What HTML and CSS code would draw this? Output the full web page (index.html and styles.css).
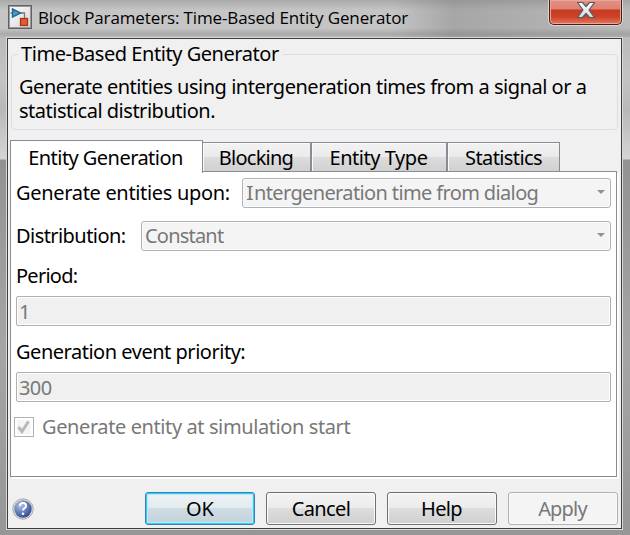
FILE: index.html
```
<!DOCTYPE html>
<html lang="en">
<head>
<meta charset="utf-8">
<title>Block Parameters: Time-Based Entity Generator</title>
<link rel="stylesheet" href="styles.css">
</head>
<body>
<div class="window">
  <header class="titlebar">
    <svg class="app-icon" width="24" height="24" viewBox="0 0 24 24">
      <defs>
        <linearGradient id="ig" x2="1" y2="1"><stop stop-color="#fff"/><stop offset="1" stop-color="#d5d5d5"/></linearGradient>
        <linearGradient id="bl" x2="1" y2="1"><stop stop-color="#2d779d"/><stop offset=".5" stop-color="#4fa5d2"/><stop offset="1" stop-color="#17557b"/></linearGradient>
      </defs>
      <rect x=".5" y=".5" width="23" height="23" fill="url(#ig)" stroke="#626262"/>
      <rect x="1.5" y="1.5" width="21" height="21" fill="none" stroke="#999"/>
      <path d="M2.500 8H5M12 8H16.500V13" fill="none" stroke="#777" stroke-width="1.300"/>
      <path d="M4.500 4L12.500 8L4.500 12Z" fill="url(#bl)" stroke="#286d94" stroke-width="1.500"/>
      <rect x="12.500" y="13.500" width="7" height="7" fill="#e25b36" stroke="#a93415" stroke-width="1.300"/>
    </svg>
    <h1 class="title">Block Parameters: Time-Based Entity Generator</h1>
    <button class="close" aria-label="Close">
      <svg width="20" height="18" viewBox="0 0 20 18">
        <defs><linearGradient id="xg" x2="0" y2="1"><stop stop-color="#fff"/><stop offset="1" stop-color="#d5d8dc"/></linearGradient></defs>
        <path d="M1.500 1.500H6.500L10 5.500L13.500 1.500H18.500L13 9L18.500 16.500H13.500L10 12.500L6.500 16.500H1.500L7 9Z" fill="url(#xg)" stroke="#555967" stroke-width="1.200" stroke-linejoin="round"/>
      </svg>
    </button>
  </header>
  <main class="client">
    <fieldset class="group">
      <legend><span class="t-legend">Time-Based Entity Generator</span></legend>
      <p class="t-desc">Generate entities using intergeneration times from a signal or a<br>statistical distribution.</p>
    </fieldset>
    <nav class="tabs">
      <div class="tab active"><span class="t-tab1">Entity Generation</span></div>
      <div class="tab blocking"><span class="t-tab2">Blocking</span></div>
      <div class="tab type"><span class="t-tab3">Entity Type</span></div>
      <div class="tab stats"><span class="t-tab4">Statistics</span></div>
    </nav>
    <section class="panel">
      <div class="row">
        <label class="label-upon"><span class="t-upon">Generate entities upon:</span></label>
        <div class="combo"><span class="t-inter"><span class="serif-i">I</span>ntergeneration time from dialog</span><i class="arrow"></i></div>
      </div>
      <div class="row second">
        <label class="label-dist"><span class="t-dist">Distribution:</span></label>
        <div class="combo"><span class="t-const">Constant</span><i class="arrow"></i></div>
      </div>
      <label class="line"><span class="t-period">Period:</span></label>
      <div class="field"><span class="t-one">1</span></div>
      <label class="line prio"><span class="t-prio">Generation event priority:</span></label>
      <div class="field"><span class="t-num">300</span></div>
      <div class="check">
        <div class="box"><svg width="14" height="14" viewBox="0 0 14 14"><path d="M1.500 7L5 11.500L11.500 1.500" fill="none" stroke="#b8b8b8" stroke-width="3"/></svg></div>
        <span class="t-check">Generate entity at simulation start</span>
      </div>
    </section>
    <footer class="footer">
      <svg class="help-icon" width="22" height="22" viewBox="0 0 22 22">
        <defs><radialGradient id="hg" cx=".35" cy=".3" r=".8"><stop stop-color="#b5c4e2"/><stop offset=".45" stop-color="#6d87c2"/><stop offset="1" stop-color="#293f88"/></radialGradient></defs>
        <circle cx="11" cy="11" r="10.200" fill="#ddd" stroke="#aaa"/>
        <circle cx="11" cy="11" r="8.700" fill="url(#hg)"/>
        <path d="M8 8Q8 5 11 5Q14 5 14 7.800Q14 9.300 12.300 10.300Q11 11.200 11 12.500" fill="none" stroke="#fff" stroke-width="2"/>
        <circle cx="11" cy="15.700" r="1.300" fill="#fff"/>
      </svg>
      <button class="btn ok"><span class="t-ok">OK</span></button>
      <button class="btn"><span class="t-cancel">Cancel</span></button>
      <button class="btn"><span class="t-help">Help</span></button>
      <button class="btn disabled"><span class="t-apply">Apply</span></button>
    </footer>
  </main>
</div>
</body>
</html>
```
FILE: styles.css
```
* { box-sizing: border-box; }
body { margin: 0; font: 20px/24px "Noto Sans", sans-serif; color: #000; overflow: hidden; }
.window {
  width: 630px; height: 535px; padding: 0 8px 0 7px;
  background:
    linear-gradient(90deg, transparent 0, rgba(140,140,140,0) 62%, rgba(120,120,120,.4) 72%, rgba(140,140,140,.2) 100%) 0 0/630px 37px no-repeat,
    linear-gradient(#aaa 0, #c5c5c5 10px, #c5c5c5 28px, #aaa 34px, #bbb 38px, #c3c3c3 80px, #b8b8b8 110px, #d5d5d5 159px, #929292 160px, #a5a5a5 350px, #969696 100%);
}
.titlebar { height: 38px; display: flex; align-items: flex-start; }
.app-icon { margin: 5px 0 0 1px; flex: none; }
.title { margin: 5px 0 0 6px; font: 17px/26px "Open Sans", sans-serif; letter-spacing: -.13px; white-space: nowrap; width: 511px; }
.close {
  width: 73px; height: 25px; padding: 0; flex: none; display: flex; justify-content: center;
  border: 1px solid #4a1c18; border-top: 0; border-radius: 0 0 5px 5px;
  background: linear-gradient(#df9387 0, #e07f70 9px, #c53a22 10px, #cf4229 17px, #e27a62 100%);
  box-shadow: inset 0 0 0 1px #eba696, 0 0 0 1px #d8d8d8;
}
.close svg { margin-top: 1px; }
.client {
  height: 491px; width: 615px; border: 1px solid #3e3e3e; background: #f0f0f0;
  box-shadow: 0 0 0 1px #d8d8d8; padding: 5px 3px 0 2px;
}
.group {
  margin: 0 0 0 1px; width: 607px; height: 86px; padding: 0 0 0 7px;
  border: 1px solid #d5dfe5; border-radius: 4px;
  white-space: nowrap;
}
.group legend { padding: 0 4px 0 3px; margin-left: -1px; height: 20px; line-height: 20px; }
.group p { margin: 11px 0 0; }
span { white-space: nowrap; }
.t-legend { letter-spacing: -.45px; }
.t-desc { letter-spacing: -.48px; }
.t-tab1 { letter-spacing: -.55px; margin-right: 2px; }
.t-tab2 { letter-spacing: -.75px; margin-right: 1px; }
.t-tab3 { letter-spacing: -.45px; margin-right: 1px; }
.t-tab4 { letter-spacing: -.6px; }
.t-upon { letter-spacing: -.32px; }
.t-inter { letter-spacing: -.63px; }
.t-dist { letter-spacing: -.56px; }
.t-const { letter-spacing: -.8px; }
.t-period { letter-spacing: -.75px; }
.t-prio { letter-spacing: -.48px; }
.t-one { margin-left: -1px; }
.t-num { letter-spacing: -.6px; margin-left: -1px; }
.t-check { letter-spacing: -.4px; }
.t-cancel { letter-spacing: -.6px; }
.t-help { letter-spacing: -.7px; margin-right: 1px; }
.t-apply { letter-spacing: -.8px; margin-right: 1px; }

/* capital I with crossbars */
.serif-i {
  display: inline-block; width: 8px; text-align: center; letter-spacing: 0; line-height: 24px;
  background:
    linear-gradient(#828282, #828282) 1px 5px/6px 1px no-repeat,
    linear-gradient(#828282, #828282) 1px 18px/6px 1px no-repeat;
}
.tabs { display: flex; align-items: flex-end; height: 32px; margin-top: 10px; }
.tab {
  flex: none; height: 30px; border: 1px solid #898c95; margin-left: -1px; text-align: center; line-height: 30px;
  background: linear-gradient(#f2f2f2 0, #ebebeb 48%, #ddd 50%, #d0d0d0 100%);
  box-shadow: inset 1px 1px #fafafa;
}
.tab.active { width: 193px; height: 33px; margin: 0 0 -1px; border-bottom: 0; background: #fff; z-index: 1; line-height: 33px; box-shadow: none; }
.tab.blocking { width: 109px; }
.tab.type { width: 136px; margin-left: 0; }
.tab.stats { width: 113px; margin-left: 0; }
.panel {
  width: 607px; height: 306px; margin-top: -1px; padding: 6px 5px 0; background: #fff; border: 1px solid #898c95;
  box-shadow: 2px 2px #fff;
}
.row { display: flex; height: 30px; align-items: center; }
.second { margin-top: 13px; }
.label-upon { width: 226px; }
.label-dist { width: 125px; }
.combo {
  flex: 1; height: 30px; border: 1px solid #adb2b5; border-radius: 3px; background: #f4f4f4; box-shadow: inset 0 0 0 1px #fcfcfc;
  color: #787878; padding: 0 5px 0 3px; display: flex; align-items: center; justify-content: space-between;
}
.arrow { border: 4px solid transparent; border-top-color: #919191; border-bottom: 0; margin-bottom: 2px; }
.line { display: block; height: 30px; line-height: 24px; margin-top: 13px; }
.line.prio { margin-top: 14px; }
.field { height: 30px; border: 1px solid #afafaf; border-radius: 2px; background: #f0f0f0; box-shadow: inset 0 0 0 1px #fff; color: #787878; padding-left: 3px; line-height: 30px; margin-top: 2px; }
.check { display: flex; align-items: center; height: 24px; margin: 13px 0 0 -2px; color: #787878; }
.box { width: 20px; height: 20px; margin-right: 8px; border: 1px solid #b1b1b1; background: #f5f5f5; box-shadow: inset 0 0 0 2px #fff; display: flex; align-items: center; justify-content: center; }
.footer { display: flex; gap: 11px; margin-top: 15px; align-items: center; }
.help-icon { margin: 1px 101px 0 2px; flex: none; }
.btn {
  width: 110px; height: 33px; padding: 0; flex: none; border: 1px solid #707070; border-radius: 3px; font: inherit; color: #000;
  background: linear-gradient(#f3f3f3 0, #ebebeb 49%, #dddddd 50%, #cfcfcf 100%); box-shadow: inset 0 0 0 1px #fafafa;
}
.ok { border-color: #3c7fb1; box-shadow: inset 0 0 0 1px #2ad0fa, inset 0 0 0 2px #bce9f6; background: linear-gradient(#edf2f5 0, #e3ebef 49%, #cfdce3 50%, #c0d1da 100%); }
.footer .ok { margin-left: -1px; }
.disabled { color: #787878; background: #f4f4f4; border-color: #adb2b5; }
```
